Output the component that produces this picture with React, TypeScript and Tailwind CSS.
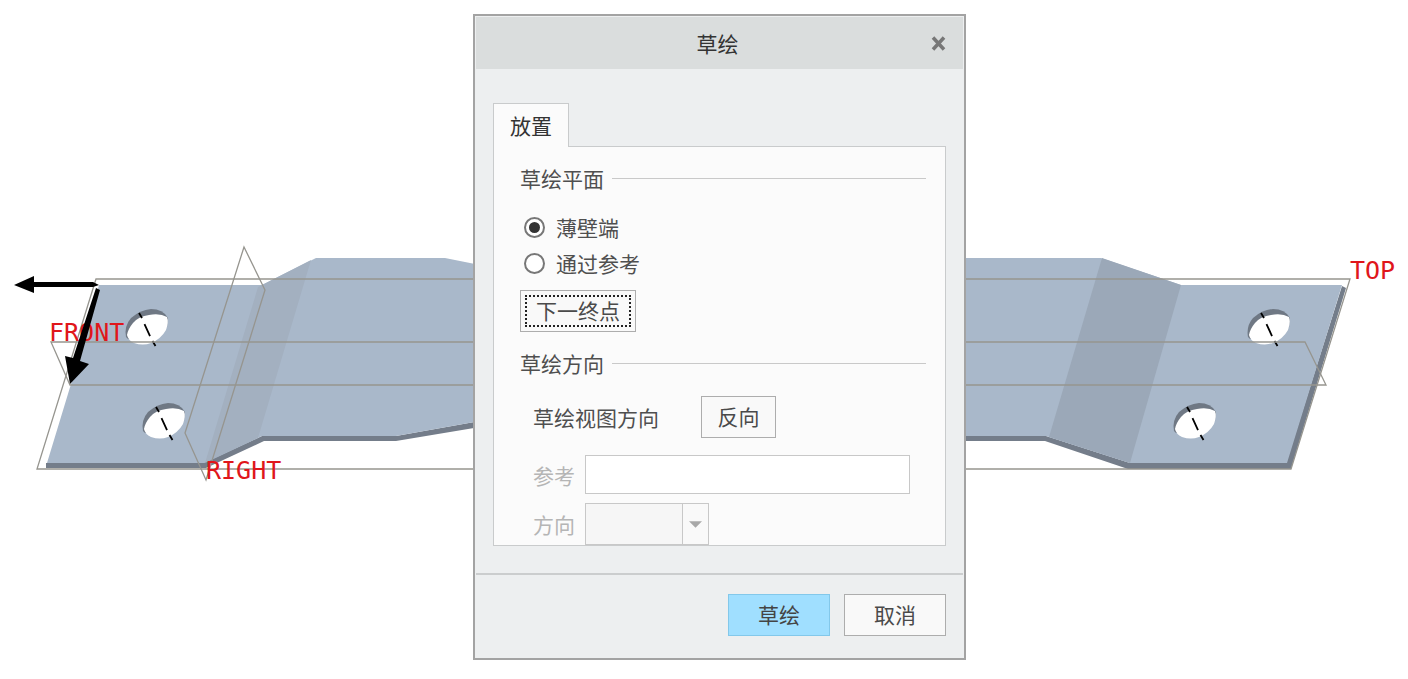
import { useState } from "react";

const PLANES = [
  { name: "TOP", points: "96,279 1350,279 1291,469 37,469", x: 1350, y: 279 },
  { name: "FRONT", points: "51,342 1305,342 1326,385 70,385", x: 49, y: 341 },
  { name: "RIGHT", points: "244,247 265,290 206,480 185,433", x: 206, y: 479 },
];

const HOLES = [
  { x: 0, y: 0 },
  { x: 17, y: 94 },
  { x: 1122, y: 0 },
  { x: 1048, y: 94 },
];

const BUTTON =
  "flex h-[42px] items-center justify-center border border-[#adadad] bg-[#f9f9f9] pb-0.5 text-[#4a4a4a]";

export default function App() {
  return (
    <div className="relative min-h-screen overflow-hidden bg-white font-['Noto_Sans_CJK_SC','Noto_Sans',sans-serif]">
      <ModelView />
      {/* Dialog floats over the model */}
      <div className="absolute inset-0 flex items-start justify-center pt-3.5 pl-[31px]">
        <SketchDialog />
      </div>
    </div>
  );
}

function SketchDialog() {
  const [source, setSource] = useState("thin");

  return (
    <form
      role="dialog"
      aria-labelledby="dialog-title"
      onSubmit={(e) => e.preventDefault()}
      className="w-[493px] border-2 border-[#a3a3a3] bg-[#edeff0] text-[21px] leading-[30px] text-[#4f4f4f]"
    >
      <header className="relative m-px flex h-[52px] items-center justify-center bg-[#dadddd] pr-1">
        <h1 id="dialog-title" className="text-[#333333]">
          草绘
        </h1>
        <button type="button" aria-label="关闭" className="absolute right-4 p-px text-[#777777]">
          <CloseIcon />
        </button>
      </header>

      <div className="px-[18px] pt-[33px]">
        <div role="tablist" className="flex">
          <button
            type="button"
            role="tab"
            id="tab-placement"
            aria-selected="true"
            aria-controls="panel-placement"
            className="relative -mb-px h-[44px] border border-b-0 border-[#c9cbcc] bg-[#fbfbfb] px-4 pb-0.5 text-[#333333]"
          >
            放置
          </button>
        </div>

        <div
          id="panel-placement"
          role="tabpanel"
          aria-labelledby="tab-placement"
          className="border border-[#c9cbcc] bg-[#fbfbfb] pt-4 pr-[19px] pl-[26px]"
        >
          <section>
            <SectionTitle>草绘平面</SectionTitle>
            <div role="radiogroup" aria-label="草绘平面" className="mt-4 mb-[9px] pl-1">
              <Radio value="thin" label="薄壁端" source={source} onPick={setSource} />
              <Radio value="through" label="通过参考" source={source} onPick={setSource} />
            </div>
            <button
              type="button"
              className={`${BUTTON} w-[116px] outline-2 -outline-offset-7 outline-dotted outline-[#222222]`}
            >
              下一终点
            </button>
          </section>

          <section className="mt-4">
            <SectionTitle>草绘方向</SectionTitle>
            <div className="pt-[18px] pl-[13px]">
              <div className="flex items-center">
                <span className="w-[168px]">草绘视图方向</span>
                <button type="button" className={`${BUTTON} w-[75px]`}>
                  反向
                </button>
              </div>
              <div className="mt-[17px] mr-4 flex items-center">
                <label htmlFor="reference" className="w-[52px] text-[#b5b5b5]">
                  参考
                </label>
                <input
                  id="reference"
                  disabled
                  className="h-[39px] min-w-0 flex-1 border border-[#c8c8c8] bg-white px-2"
                />
              </div>
              <div className="mt-[9px] flex items-center">
                <label htmlFor="orientation" className="w-[52px] text-[#b5b5b5]">
                  方向
                </label>
                <div className="relative">
                  <select
                    id="orientation"
                    disabled
                    className="block h-[42px] w-[124px] appearance-none border border-[#c8c8c8] bg-[#f6f6f6]"
                  />
                  <span className="pointer-events-none absolute inset-y-px right-px flex w-[26px] items-center justify-center border-l border-[#c8c8c8] bg-[#f9f9f9]">
                    <svg width="13" height="7" viewBox="0 0 14 7" fill="#a8a8a8" aria-hidden>
                      <path d="M0 0h14L7 7z" />
                    </svg>
                  </span>
                </div>
              </div>
            </div>
          </section>
        </div>
      </div>

      <footer className="mx-px mt-[27px] flex justify-end gap-3.5 border-t-2 border-[#cbcdce] px-[17px] pt-[19px] pb-[22px]">
        <button
          type="submit"
          className="flex h-[42px] w-[102px] items-center justify-center border border-[#83c8ea] bg-[#a0dfff] pb-0.5 text-[#444444]"
        >
          草绘
        </button>
        <button type="button" className={`${BUTTON} w-[102px]`}>
          取消
        </button>
      </footer>
    </form>
  );
}

function SectionTitle({ children }: { children: string }) {
  return (
    <div className="flex items-center gap-2">
      <h2>{children}</h2>
      <span className="h-px flex-1 bg-[#c9c9c9]" />
    </div>
  );
}

function Radio({
  value,
  label,
  source,
  onPick,
}: {
  value: string;
  label: string;
  source: string;
  onPick: (v: string) => void;
}) {
  return (
    <label className="flex h-9 items-center gap-[11px]">
      <input
        type="radio"
        name="source"
        value={value}
        checked={source === value}
        onChange={() => onPick(value)}
        className="grid size-[21px] appearance-none place-content-center rounded-full border-2 border-[#777777] bg-white before:size-[11px] before:rounded-full checked:before:bg-[#333333]"
      />
      {label}
    </label>
  );
}

function ModelView() {
  return (
    <svg viewBox="0 0 1408 679" className="block w-full" role="img" aria-label="TOP FRONT RIGHT">
      {/* Side faces: thickness along the bottom and right edges */}
      <path
        d="M46 463H203L262 436H396L480 421V427L396 441H264L206 468H46z M960 436H1046L1130 463H1286L1342 286L1346 288L1291 469H1128L1045 441H960z"
        fill="#747d8a"
      />
      {/* Top face */}
      <path
        d="M99 285H262L316 258H445L480 265V421L396 436H262L204 463H47L71 384z"
        fill="#a9b8ca"
      />
      <path d="M960 258H1101L1181 285H1342L1287 463H1130L1046 436H960z" fill="#a9b8ca" />
      {/* Bends */}
      <path d="M258 287L262 285L311 260L258 438L205 463z" fill="#a3b0c0" />
      <path d="M1102 258L1181 285L1130 463L1049 437z" fill="#9ba8b8" />

      {HOLES.map((h) => (
        <g key={`${h.x}-${h.y}`} transform={`translate(${h.x} ${h.y})`}>
          <path
            d="M126 337Q124 326 131 318Q140 310 151 309Q163 309 168 318L167 327Q160 330 128 339z"
            fill="#6f7884"
          />
          <path
            d="M127 335Q128 329 133 323Q139 316 149 315Q160 313 167 317Q169 322 166 330Q161 339 151 343Q143 346 134 343Q128 340 127 335z"
            fill="white"
          />
          <path
            d="M139 313L142 318M144.500 324L150 336M152.500 341L155.500 346"
            stroke="black"
            strokeWidth="1.800"
          />
        </g>
      ))}

      {PLANES.map((p) => (
        <polygon key={p.name} points={p.points} fill="none" stroke="#96958f" strokeWidth="1.300" />
      ))}
      {PLANES.map((p) => (
        <text
          key={p.name}
          x={p.x}
          y={p.y}
          fill="#e0161b"
          className="font-['DejaVu_Sans_Mono',monospace] text-[25px]"
        >
          {p.name}
        </text>
      ))}

      {/* Direction arrows */}
      <path d="M14 285L34 276V282L93 282L99 285L93 287H34V293z" />
      <path d="M96 288L100 290L80 361L89 364L70 384L65 356L73 358z" />
    </svg>
  );
}

function CloseIcon() {
  return (
    <svg width="15" height="15" viewBox="0 0 15 15" fill="none" stroke="currentColor" strokeWidth="3.500" aria-hidden>
      <path d="M2 1.500L13 13.500M13 1.500L2 13.500" />
    </svg>
  );
}
